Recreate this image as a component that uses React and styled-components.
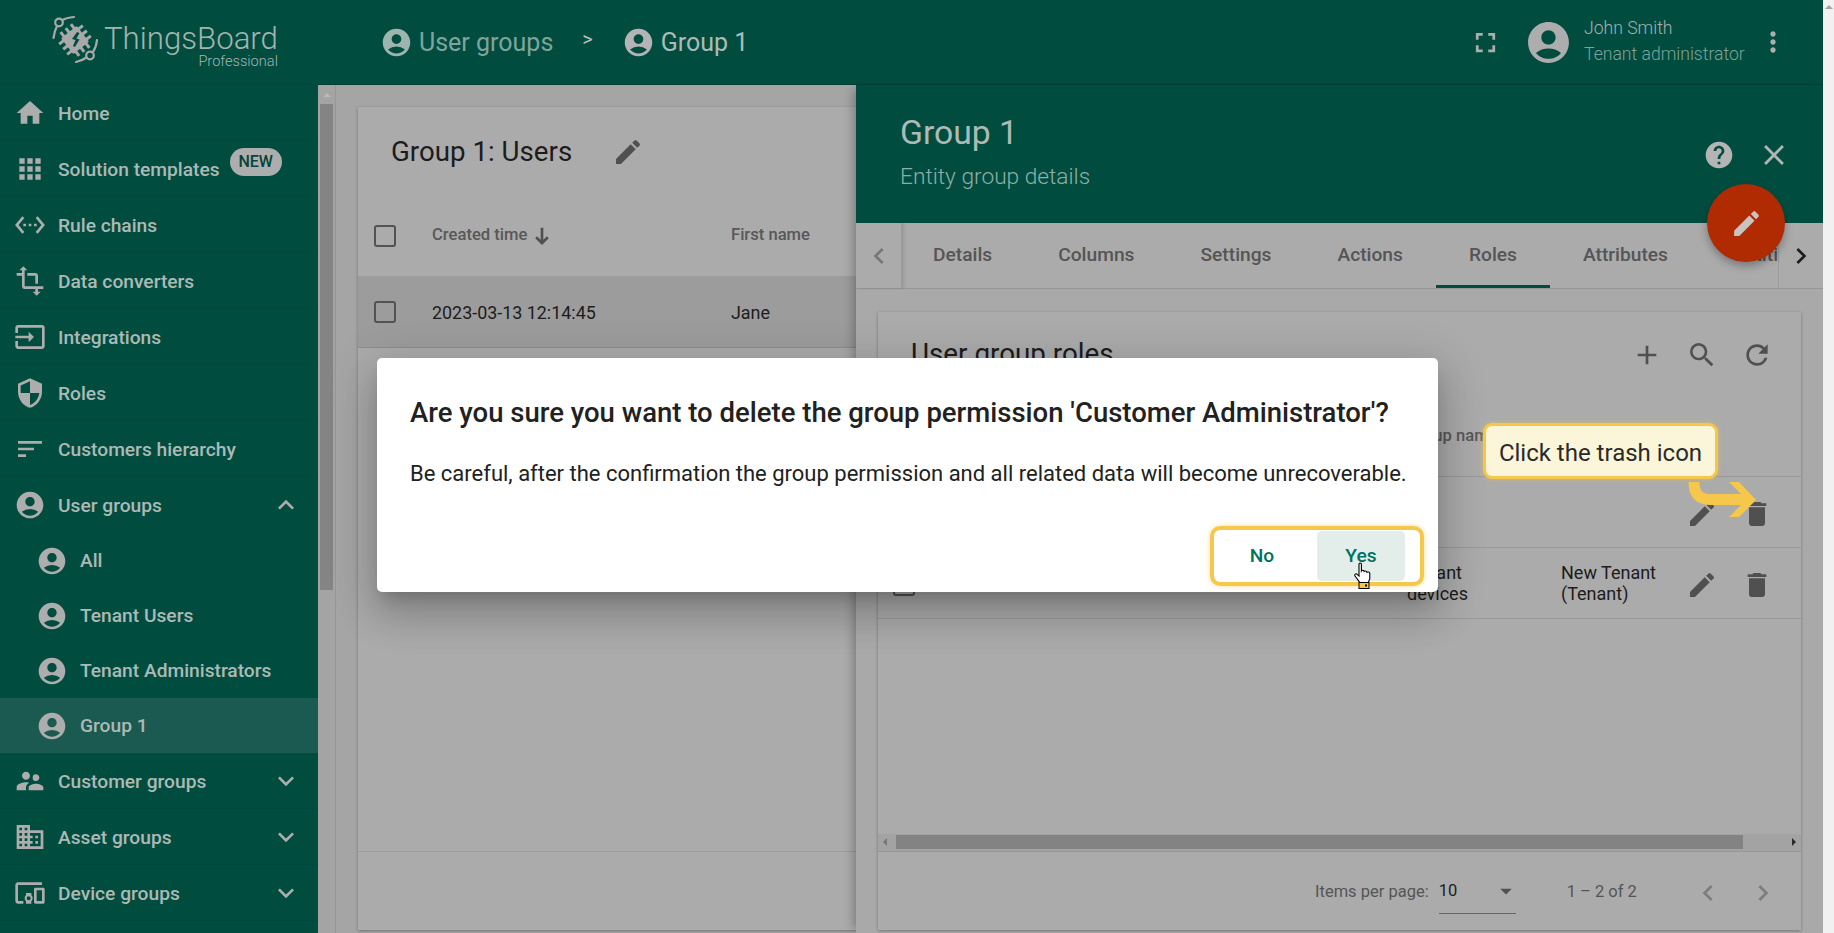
import React from 'react';
import styled, { createGlobalStyle } from 'styled-components';
import {
  MdHome, MdApps, MdSettingsEthernet, MdTransform, MdInput, MdSecurity, MdSort,
  MdAccountCircle, MdExpandLess, MdExpandMore, MdSupervisorAccount, MdDomain, MdDevicesOther,
  MdFullscreen, MdMoreVert, MdEdit, MdHelp, MdClose, MdAdd, MdSearch, MdRefresh, MdDelete,
  MdChevronLeft, MdChevronRight, MdArrowDropDown,
} from 'react-icons/md';

const GlobalStyle = createGlobalStyle`
  html, body { margin: 0; height: 100%; overflow: hidden; }
  body { font-family: Roboto, "Liberation Sans", sans-serif; background: #a6a6a6; }
`;

const Page = styled.div`
  position: relative;
  display: flex;
  width: 1834px;
  height: 933px;
  overflow: hidden;
`;

/* sidebar */
const Sidebar = styled.aside`
  width: 318px;
  flex: none;
  background: #004d40;
  color: #adb9b5;
`;

const LogoBox = styled.div`
  height: 85px;
  display: flex;
  padding-left: 40px;
  border-bottom: 1px solid #01463b;
  box-sizing: border-box;
`;

const LogoText = styled.div`
  margin-left: -6px;
  padding-top: 22px;
  display: flex;
  flex-direction: column;
  align-items: flex-end;
  color: #a5b3ae;
`;

const LogoName = styled.div`
  font-size: 31.2px;
  font-weight: 300;
  line-height: 33px;
`;

const LogoSub = styled.div`
  font-size: 14.6px;
  font-weight: 300;
  line-height: 12px;
`;

const NavItem = styled.div`
  height: ${p => (p.$sub ? 55 : 56)}px;
  box-sizing: border-box;
  display: flex;
  align-items: center;
  padding-left: ${p => (p.$sub ? 36 : 14)}px;
  padding-right: 16px;
  padding-top: ${p => (p.$plain ? 0 : 1)}px;
  font-weight: 500;
  background: ${p => (p.$active ? '#1b5a50' : 'transparent')};
  border-bottom: ${p => (p.$plain ? 'none' : '1px solid #01473c')};

  svg { flex: none; color: #adadad; }
`;

const NavLabel = styled.span`
  margin-left: 12px;
  font-size: 19.2px;
`;

const NewBadge = styled.span`
  align-self: flex-start;
  margin: 6px 0 0 10px;
  width: 52px;
  height: 28px;
  border-radius: 14px;
  background: #adadad;
  color: #024437;
  font-size: 16px;
  line-height: 28px;
  text-align: center;
`;

const Chevron = styled.span`
  margin-left: auto;
  display: flex;
`;

const BarTrack = styled.div`
  width: 18px;
  flex: none;
  background: #a4a4a4;
  padding: 0 2px;
  box-sizing: border-box;
  border-right: 1px solid #979797;
`;

const BarArrow = styled.div`
  height: 19px;
  display: flex;
  align-items: center;
  justify-content: center;
`;

const BarThumb = styled.div`
  height: 486px;
  background: #848484;
`;

/* top bar */
const Center = styled.div`
  flex: 1;
  min-width: 0;
  display: flex;
  flex-direction: column;
`;

const TopBar = styled.header`
  height: 85px;
  flex: none;
  box-sizing: border-box;
  background: #004d40;
  border-bottom: 1px solid #013f35;
  display: flex;
  align-items: center;
  padding-left: 62px;
`;

const Crumb = styled.div`
  display: flex;
  align-items: center;
  gap: 6px;
  font-size: 25px;
  color: ${p => (p.$dim ? '#7fa49c' : '#adbab6')};

  svg { color: ${p => (p.$dim ? '#9eb5af' : '#b4b4b4')}; }
`;

const CrumbSep = styled.span`
  margin: -6px 29px 0 29px;
  font-size: 20px;
  color: #b4bfbb;
`;

const TopRight = styled.div`
  margin-left: auto;
  display: flex;
  align-items: center;
  padding-right: 34px;
  color: #adadad;
`;

const UserText = styled.div`
  margin: -2px 9px 0 11px;
  width: 164px;
  font-weight: 300;
  font-size: 17.6px;
  line-height: 26px;
  white-space: nowrap;
`;

const UserRole = styled.div`
  color: #7ea198;
`;

const BodyRow = styled.div`
  flex: 1;
  min-height: 0;
  display: flex;
`;

/* left table */
const Main = styled.main`
  width: 520px;
  flex: none;
  padding: 22px 0 0 22px;
  box-sizing: border-box;
  overflow: hidden;
  background: #a5a5a5;
`;

const Card = styled.section`
  width: 560px;
  height: 823px;
  background: #ababab;
  display: flex;
  flex-direction: column;
  box-shadow: 0 1px 3px rgba(0,0,0,.3);
`;

const CardHead = styled.div`
  height: 90px;
  flex: none;
  display: flex;
  align-items: center;
  padding: 0 0 2px 33px;
  box-sizing: border-box;
  font-size: 27.7px;
  color: #1c1c1c;

  svg { margin: 2px 0 0 40px; color: #505050; }
`;

const HeadRow = styled.div`
  height: 80px;
  flex: none;
  padding-bottom: 5px;
  box-sizing: border-box;
  display: flex;
  align-items: center;
  padding-left: 16px;
  font-size: 16.6px;
  font-weight: 500;
  color: #585858;
  border-bottom: 1px solid #9b9b9b;
`;

const SortArrow = styled.svg`
  margin: 4px 0 0 5px;
  flex: none;
`;

const DataRow = styled.div`
  height: 71px;
  flex: none;
  box-sizing: border-box;
  display: flex;
  align-items: center;
  padding-left: 16px;
  font-size: 17.9px;
  color: #1c1c1c;
  background: #9c9c9c;
  border-bottom: 1px solid #8d8d8d;
`;

const CheckBox = styled.span`
  display: block;
  width: 22px;
  height: 22px;
  flex: none;
  box-sizing: border-box;
  border: 2.5px solid #535353;
  border-radius: 3px;
  margin-top: ${p => p.$drop || 0}px;
`;

const Cell = styled.span`
  width: ${p => p.$w}px;
  flex: none;
  display: flex;
  align-items: center;
`;

const CardSpacer = styled.div`
  flex: 1;
`;

const CardFoot = styled.div`
  height: 78px;
  flex: none;
  border-top: 1px solid #9b9b9b;
`;

/* details drawer */
const Drawer = styled.section`
  width: 967px;
  flex: none;
  display: flex;
  flex-direction: column;
  background: #a9a9a9;
  box-shadow: -6px 0 10px -4px rgba(0,0,0,.3);
  z-index: 1;
`;

const DrawerHead = styled.div`
  height: 138px;
  flex: none;
  box-sizing: border-box;
  background: #004d40;
  padding: 26px 32px 0 44px;
  display: flex;
`;

const DrawerTitle = styled.div`
  font-size: 33.7px;
  line-height: 44px;
  color: #adbab6;
`;

const DrawerSub = styled.div`
  margin-top: 9px;
  font-size: 22.7px;
  line-height: 26px;
  font-weight: 300;
  color: #8fada6;
`;

const DrawerTools = styled.div`
  margin-left: auto;
  display: flex;
  align-items: center;
  gap: 22px;
  height: 62px;
  margin-top: 13px;
  color: #b4b4b4;
`;

const TabBar = styled.div`
  height: 66px;
  flex: none;
  box-sizing: border-box;
  display: flex;
  background: #ababab;
  border-bottom: 1px solid #979797;
`;

const TabScroll = styled.div`
  position: relative;
  width: ${p => p.$w}px;
  flex: none;
  display: flex;
  align-items: center;
  justify-content: center;
  background: #ababab;
  color: ${p => p.$color};
  ${p => (p.$left ? 'border-right: 1px solid #9a9a9a; box-shadow: 2px 0 3px rgba(0,0,0,.12);' : 'border-left: 1px solid #9a9a9a;')}
`;

const Tabs = styled.div`
  flex: 1;
  min-width: 0;
  display: flex;
  overflow: hidden;
`;

const Tab = styled.div`
  flex: none;
  box-sizing: border-box;
  height: 65px;
  padding: 0 33px;
  margin-left: ${p => (p.$first ? -2 : 0)}px;
  display: flex;
  align-items: center;
  font-size: 19.2px;
  font-weight: 500;
  color: #555;
  border-bottom: 3px solid ${p => (p.$active ? '#004d40' : 'transparent')};
`;

const DrawerBody = styled.div`
  flex: 1;
  min-height: 0;
  padding: 23px 22px 0;
`;

const InnerCard = styled.div`
  height: 618px;
  display: flex;
  flex-direction: column;
  background: #ababab;
  box-shadow: 0 1px 3px rgba(0,0,0,.3);
`;

const InnerBar = styled.div`
  height: 82px;
  flex: none;
  box-sizing: border-box;
  padding: 0 28px 0 33px;
  display: flex;
  align-items: center;
  font-size: 27.8px;
  color: #1c1c1c;
`;

const IconGroup = styled.div`
  margin-left: auto;
  margin-top: 3px;
  display: flex;
  gap: ${p => p.$gap}px;
  color: #505050;
`;

const RoleHead = styled.div`
  height: 83px;
  flex: none;
  box-sizing: border-box;
  display: flex;
  align-items: center;
  padding-left: 529px;
  font-size: 16.6px;
  font-weight: 500;
  color: #585858;
  border-bottom: 1px solid #989898;
`;

const RoleRow = styled.div`
  height: 71px;
  flex: none;
  box-sizing: border-box;
  display: flex;
  align-items: center;
  padding: 0 28px 0 15px;
  font-size: 18px;
  line-height: 21px;
  color: #1c1c1c;
  border-bottom: 1px solid #989898;
`;

const RoleCell = styled.div`
  width: ${p => p.$w}px;
  flex: none;
`;

const HScroll = styled.div`
  margin-top: auto;
  height: 18px;
  flex: none;
  box-sizing: border-box;
  display: flex;
  align-items: center;
  background: #a3a3a3;
  border-bottom: 1px solid #979797;
  padding: 0 5px 2px;
`;

const HThumb = styled.div`
  margin-left: 9px;
  width: 847px;
  height: 14px;
  background: #838383;
`;

const ScrollArrow = styled.span`
  width: 0;
  height: 0;
  border-style: solid;
  border-width: 4px 0;
  border-color: transparent;
  ${p => (p.$right
    ? 'border-left: 4px solid #2b2b2b; margin-left: auto;'
    : 'border-right: 4px solid #777;')}
`;

const Pager = styled.div`
  height: 78px;
  flex: none;
  display: flex;
  align-items: center;
  padding-left: 437px;
  font-size: 16.5px;
  color: #555;
`;

const PageSelect = styled.div`
  margin-left: 10px;
  width: 77px;
  height: 39px;
  box-sizing: border-box;
  margin-top: 6px;
  padding-bottom: 7px;
  border-bottom: 1px solid #666;
  display: flex;
  align-items: center;
  justify-content: space-between;
  color: #1c1c1c;

  svg { color: #505050; margin: 1px -4px 0 0; }
`;

const PageRange = styled.span`
  margin-left: 51px;
  width: 125px;
`;

const PagerArrows = styled.div`
  display: flex;
  gap: 23px;
  margin-top: 3px;
  color: #7d7d7d;
`;

const PageStrip = styled.div`
  width: 11px;
  flex: none;
  background: #f1f1f1;
  padding-top: 5px;
  display: flex;
  justify-content: center;
  align-items: flex-start;
`;

const UpArrow = styled.span`
  width: 0;
  height: 0;
  border-left: 4px solid transparent;
  border-right: 4px solid transparent;
  border-bottom: 4px solid ${p => p.$color};
`;

/* things lying over the page */
const Fab = styled.div`
  position: absolute;
  left: 1707px;
  top: 184px;
  width: 78px;
  height: 78px;
  border-radius: 50%;
  background: #b02a02;
  color: #c9c4c2;
  display: flex;
  align-items: center;
  justify-content: center;
  box-shadow: 0 4px 8px rgba(0,0,0,.3);
  z-index: 2;
`;

const Dialog = styled.div`
  position: absolute;
  left: 377px;
  top: 358px;
  width: 1061px;
  height: 234px;
  box-sizing: border-box;
  background: #fff;
  border-radius: 5px;
  padding: 40px 14px 6px 33px;
  display: flex;
  flex-direction: column;
  color: #212121;
  box-shadow: 0 11px 15px -7px rgba(0,0,0,.2), 0 24px 38px 3px rgba(0,0,0,.14), 0 9px 46px 8px rgba(0,0,0,.12);
  z-index: 3;
`;

const DialogTitle = styled.h2`
  margin: 0;
  font-size: 27.5px;
  line-height: 30px;
  font-weight: 500;
  white-space: nowrap;
`;

const DialogText = styled.p`
  margin: 31px 0 0;
  font-size: 22px;
  line-height: 30px;
  white-space: nowrap;
`;

const DialogActions = styled.div`
  margin-top: auto;
  align-self: flex-end;
  box-sizing: border-box;
  width: 214px;
  height: 60px;
  border: 4px solid #f5c84c;
  border-radius: 10px;
  box-shadow: 0 0 5px rgba(245,200,76,.6);
  padding: 1px 15px 1px 4px;
  display: flex;
  gap: 11px;
`;

const DialogButton = styled.button`
  width: 88px;
  height: 50px;
  border: none;
  border-radius: 5px;
  padding: 0 0 2px;
  background: ${p => (p.$hover ? '#e3eeeb' : 'transparent')};
  color: #00705f;
  font: 500 19.2px Roboto, sans-serif;
`;

const HandCursor = styled.svg`
  position: absolute;
  left: 1353px;
  top: 562px;
  z-index: 4;
`;

const TourTip = styled.div`
  position: absolute;
  left: 1483px;
  top: 423px;
  width: 235px;
  height: 56px;
  box-sizing: border-box;
  border: 3px solid #f5c84c;
  border-radius: 9px;
  background: #fbf6d9;
  color: #2a2a2a;
  font-size: 24px;
  line-height: 54px;
  text-align: center;
  box-shadow: 0 0 5px rgba(245,200,76,.6);
  z-index: 2;
`;

const TourArrow = styled.svg`
  position: absolute;
  left: 1685px;
  top: 480px;
  z-index: 2;
`;

const Logo = () => (
  <svg width="70" height="70" viewBox="0 0 70 70" style={{ flex: 'none', marginTop: 5 }}>
    <g fill="none" stroke="#a9a9a9" strokeWidth="2.2" strokeLinecap="round">
      <path d="M34 12 C29 12.5 25 13.5 22.5 15" />
      <circle cx="19" cy="17.5" r="3.8" />
      <path d="M17 21 C15 25 14 29 13.5 33" />
      <path d="M57 35 C56.5 40 55 44 53 47" />
      <circle cx="50" cy="50.5" r="3.8" />
      <path d="M46.5 52.5 C43 55 40 56 36 57" />
    </g>
    <g transform="rotate(-38 35 35)" fill="#a9a9a9">
      <rect x="25" y="25" width="20" height="20" rx="1" />
      <rect x="27" y="20" width="3" height="30" />
      <rect x="33.5" y="20" width="3" height="30" />
      <rect x="40" y="20" width="3" height="30" />
      <rect x="20" y="27" width="30" height="3" />
      <rect x="20" y="33.5" width="30" height="3" />
      <rect x="20" y="40" width="30" height="3" />
    </g>
    <path d="M37 27 L32 34 L35.5 35 L33 41 L35 42 L39.5 34.5 L36.5 33.5 L39.5 28 Z" fill="#004d40" />
  </svg>
);

const navTop = [
  { icon: MdHome, label: 'Home' },
  { icon: MdApps, label: 'Solution templates', badge: 'NEW' },
  { icon: MdSettingsEthernet, label: 'Rule chains' },
  { icon: MdTransform, label: 'Data converters' },
  { icon: MdInput, label: 'Integrations' },
  { icon: MdSecurity, label: 'Roles' },
  { icon: MdSort, label: 'Customers hierarchy' },
];

const navGroups = ['All', 'Tenant Users', 'Tenant Administrators', 'Group 1'];

const navBottom = [
  { icon: MdSupervisorAccount, label: 'Customer groups' },
  { icon: MdDomain, label: 'Asset groups' },
  { icon: MdDevicesOther, label: 'Device groups' },
];

const tabs = ['Details', 'Columns', 'Settings', 'Actions', 'Roles', 'Attributes', 'Entities'];

const Actions = () => (
  <IconGroup $gap={23}>
    <MdEdit size={32} />
    <MdDelete size={32} />
  </IconGroup>
);

export default function App() {
  return (
    <Page>
      <GlobalStyle />
      <Sidebar>
        <LogoBox>
          <Logo />
          <LogoText>
            <LogoName>ThingsBoard</LogoName>
            <LogoSub>Professional</LogoSub>
          </LogoText>
        </LogoBox>
        {navTop.map(({ icon: Icon, label, badge }) => (
          <NavItem key={label}>
            <Icon size={32} />
            <NavLabel>{label}</NavLabel>
            {badge && <NewBadge>{badge}</NewBadge>}
          </NavItem>
        ))}
        <NavItem $plain>
          <MdAccountCircle size={32} />
          <NavLabel>User groups</NavLabel>
          <Chevron><MdExpandLess size={32} /></Chevron>
        </NavItem>
        {navGroups.map(label => (
          <NavItem key={label} $sub $plain $active={label === 'Group 1'}>
            <MdAccountCircle size={32} />
            <NavLabel>{label}</NavLabel>
          </NavItem>
        ))}
        {navBottom.map(({ icon: Icon, label }) => (
          <NavItem key={label}>
            <Icon size={32} />
            <NavLabel>{label}</NavLabel>
            <Chevron><MdExpandMore size={32} /></Chevron>
          </NavItem>
        ))}
      </Sidebar>

      <Center>
        <TopBar>
          <Crumb $dim><MdAccountCircle size={33} />User groups</Crumb>
          <CrumbSep>&gt;</CrumbSep>
          <Crumb><MdAccountCircle size={33} />Group 1</Crumb>
          <TopRight>
            <MdFullscreen size={33} style={{ marginRight: 22 }} />
            <MdAccountCircle size={49} />
            <UserText>
              John Smith
              <UserRole>Tenant administrator</UserRole>
            </UserText>
            <MdMoreVert size={32} />
          </TopRight>
        </TopBar>

        <BodyRow>
          <BarTrack>
            <BarArrow><UpArrow $color="#b9b9b9" /></BarArrow>
            <BarThumb />
          </BarTrack>

          <Main>
            <Card>
              <CardHead>Group 1: Users<MdEdit size={32} /></CardHead>
              <HeadRow>
                <Cell $w={58}><CheckBox $drop={3} /></Cell>
                <Cell $w={299}>
                  Created time
                  <SortArrow width="20" height="20" viewBox="0 0 24 24" fill="none" stroke="#505050" strokeWidth="3.2">
                    <path d="M12 2 V20 M5 13.5 L12 20.5 L19 13.5" />
                  </SortArrow>
                </Cell>
                <Cell $w={120}>First name</Cell>
              </HeadRow>
              <DataRow>
                <Cell $w={58}><CheckBox /></Cell>
                <Cell $w={299}>2023-03-13 12:14:45</Cell>
                <Cell $w={120}>Jane</Cell>
              </DataRow>
              <CardSpacer />
              <CardFoot />
            </Card>
          </Main>

          <Drawer>
            <DrawerHead>
              <div>
                <DrawerTitle>Group 1</DrawerTitle>
                <DrawerSub>Entity group details</DrawerSub>
              </div>
              <DrawerTools>
                <MdHelp size={32} />
                <MdClose size={34} />
              </DrawerTools>
            </DrawerHead>
            <TabBar>
              <TabScroll $left $w={45} $color="#777"><MdChevronLeft size={32} /></TabScroll>
              <Tabs>
                {tabs.map((t, i) => <Tab key={t} $first={i === 0} $active={t === 'Roles'}>{t}</Tab>)}
              </Tabs>
              <TabScroll $w={44} $color="#1c1c1c"><MdChevronRight size={32} /></TabScroll>
            </TabBar>
            <DrawerBody>
              <InnerCard>
                <InnerBar>
                  User group roles
                  <IconGroup $gap={23}>
                    <MdAdd size={32} />
                    <MdSearch size={32} />
                    <MdRefresh size={32} />
                  </IconGroup>
                </InnerBar>
                <RoleHead>Group name</RoleHead>
                <RoleRow>
                  <RoleCell $w={514}><CheckBox $drop={3} /></RoleCell>
                  <Actions />
                </RoleRow>
                <RoleRow>
                  <RoleCell $w={514}><CheckBox $drop={3} /></RoleCell>
                  <RoleCell $w={154}>Tenant<br />devices</RoleCell>
                  <RoleCell $w={120}>New Tenant<br />(Tenant)</RoleCell>
                  <Actions />
                </RoleRow>
                <HScroll>
                  <ScrollArrow />
                  <HThumb />
                  <ScrollArrow $right />
                </HScroll>
                <Pager>
                  Items per page:
                  <PageSelect>10<MdArrowDropDown size={28} /></PageSelect>
                  <PageRange>1 – 2 of 2</PageRange>
                  <PagerArrows>
                    <MdChevronLeft size={32} />
                    <MdChevronRight size={32} />
                  </PagerArrows>
                </Pager>
              </InnerCard>
            </DrawerBody>
          </Drawer>
        </BodyRow>
      </Center>

      <PageStrip><UpArrow $color="#a3a3a3" /></PageStrip>

      <Fab><MdEdit size={33} /></Fab>

      <Dialog>
        <DialogTitle>Are you sure you want to delete the group permission 'Customer Administrator'?</DialogTitle>
        <DialogText>Be careful, after the confirmation the group permission and all related data will become unrecoverable.</DialogText>
        <DialogActions>
          <DialogButton>No</DialogButton>
          <DialogButton $hover>Yes</DialogButton>
        </DialogActions>
      </Dialog>

      <HandCursor width="19" height="27" viewBox="0 0 19 27">
        <path d="M6 2 C6 .6 8.4 .6 8.4 2 V9 C9 8 11 8 11.2 9.5 C12 8.6 13.8 8.8 14 10.4 C15 9.6 16.8 10 16.8 11.6 V16 C16.8 18 15.6 19 15.4 20.5 H6.6 C6 18.5 3.8 16.8 2 14 C1 12.4 2.8 11 4.2 12.4 L6 14 Z" fill="#fff" stroke="#000" strokeWidth="1.1" />
        <rect x="6" y="20.5" width="10" height="6" fill="#f5c84c" stroke="#000" />
        <rect x="12" y="22.5" width="2" height="2" fill="#000" />
      </HandCursor>

      <TourTip>Click the trash icon</TourTip>
      <TourArrow width="74" height="40" viewBox="0 0 74 40">
        <path d="M9 2 C9 14 14 19.5 26 19.5 H60" fill="none" stroke="#f5c84c" strokeWidth="11" />
        <polygon points="44,2 54,2 71,20 54,37 44,37 56,25 56,14" fill="#f5c84c" />
      </TourArrow>
    </Page>
  );
}
